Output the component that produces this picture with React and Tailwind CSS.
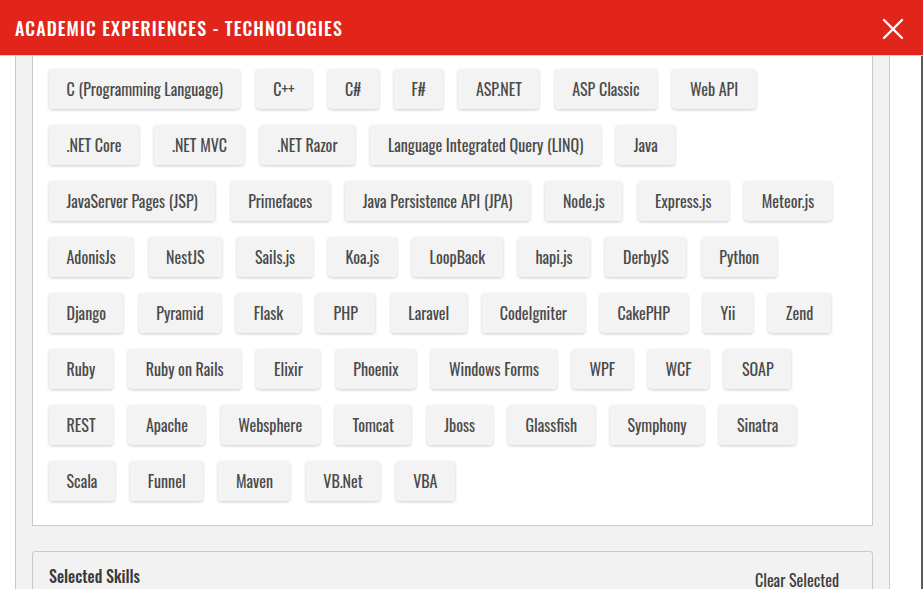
import React from 'react';
import { X } from 'lucide-react';

const TECHS = [
  'C (Programming Language)', 'C++', 'C#', 'F#', 'ASP.NET', 'ASP Classic', 'Web API',
  '.NET Core', '.NET MVC', '.NET Razor', 'Language Integrated Query (LINQ)', 'Java',
  'JavaServer Pages (JSP)', 'Primefaces', 'Java Persistence API (JPA)', 'Node.js', 'Express.js', 'Meteor.js',
  'AdonisJs', 'NestJS', 'Sails.js', 'Koa.js', 'LoopBack', 'hapi.js', 'DerbyJS', 'Python',
  'Django', 'Pyramid', 'Flask', 'PHP', 'Laravel', 'CodeIgniter', 'CakePHP', 'Yii', 'Zend',
  'Ruby', 'Ruby on Rails', 'Elixir', 'Phoenix', 'Windows Forms', 'WPF', 'WCF', 'SOAP',
  'REST', 'Apache', 'Websphere', 'Tomcat', 'Jboss', 'Glassfish', 'Symphony', 'Sinatra',
  'Scala', 'Funnel', 'Maven', 'VB.Net', 'VBA'
];

const font = "font-['Oswald','Roboto_Condensed','DejaVu_Sans_Condensed',sans-serif]";

export default function App() {
  return (
    <div className={`w-[923px] h-[589px] overflow-hidden bg-white flex flex-col ${font}`}>
      {/* Header */}
      <div className="h-[56px] shrink-0 bg-[#e1251b] border-b border-[#d4d4d4] flex items-center justify-between pl-[15px] pr-[12px]">
        <h1 className="text-white text-[18px] font-medium tracking-[1.1px] uppercase leading-none">
          Academic Experiences - Technologies
        </h1>
        <button className="text-white mt-[3px]">
          <X size={36} strokeWidth={1.6} />
        </button>
      </div>

      {/* Body */}
      <div className="flex-1 min-h-0 flex pl-[15px] border-r-2 border-[#5a5a5a]">
        <div className="w-[875px] bg-[#f2f2f2] border-x border-[#c9c9c9] px-4 flex flex-col">
          {/* Technologies panel */}
          <div className="bg-white border border-t-0 border-[#c9c9c9] pt-[13px] pb-[8px] px-4">
            <div className="flex flex-wrap">
              {TECHS.map(t => (
                <button
                  key={t}
                  className="h-10 px-[17.5px] mr-[15.4px] mb-4 bg-[#f3f3f3] rounded-[3px] shadow-[0_1px_3px_rgba(0,0,0,0.2)] text-[#4a4a4a] text-[16px] font-normal whitespace-nowrap"
                >
                  {t}
                </button>
              ))}
            </div>
          </div>

          {/* Selected skills */}
          <div className="mt-[25px] border border-[#c9c9c9] rounded-t-[3px] bg-[#f2f2f2] px-4 pt-[12px] h-[60px]">
            <div className="flex items-start justify-between">
              <span className="text-[16px] font-medium text-[#3a3a3a]">Selected Skills</span>
              <span className="text-[16px] font-normal text-[#3a3a3a] mt-[4px] mr-[17px]">Clear Selected</span>
            </div>
          </div>
        </div>
      </div>
    </div>
  );
}
